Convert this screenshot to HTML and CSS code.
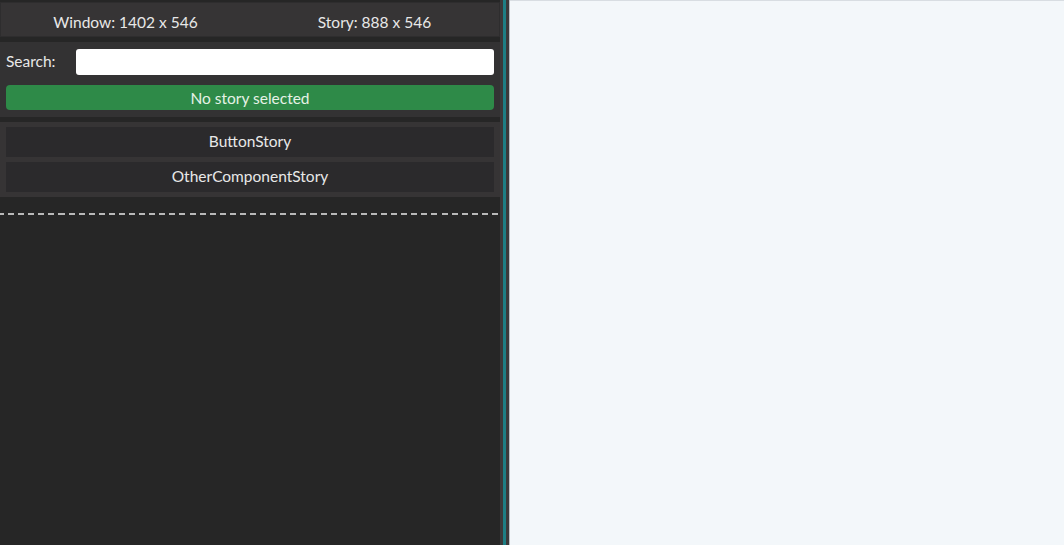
FILE: index.html
```html
<!DOCTYPE html>
<html>
<head>
<meta charset="utf-8">
<link rel="stylesheet" href="styles.css">
</head>
<body>
<div class="app">
  <aside class="sidebar">
    <div class="panel header">
      <div class="cell">Window: 1402 x 546</div>
      <div class="cell">Story: 888 x 546</div>
    </div>
    <div class="panel search">
      <div class="search-row">
        <label class="search-label">Search:</label>
        <input class="search-input" type="text">
      </div>
      <div class="status">No story selected</div>
    </div>
    <div class="panel list">
      <div class="item">ButtonStory</div>
      <div class="item">OtherComponentStory</div>
    </div>
    <div class="dashed"></div>
  </aside>
  <div class="divider">
    <div class="div-a"></div>
    <div class="div-teal"></div>
    <div class="div-b"></div>
    <div class="div-c"></div>
  </div>
  <main class="stage"></main>
</div>
</body>
</html>
```

FILE: styles.css
```css
html, body {
  margin: 0;
  padding: 0;
  height: 100%;
}
body {
  font-family: Lato, "Noto Sans", sans-serif;
  font-size: 15.5px;
  color: #e8e8e8;
  background: #f3f7fa;
}
.app {
  display: flex;
  height: 545px;
}
.sidebar {
  width: 500px;
  background: #262626;
  display: flex;
  flex-direction: column;
  padding-top: 2px;
  box-sizing: border-box;
}
.panel {
  background: #363435;
  box-sizing: border-box;
}
.header {
  height: 35px;
  display: flex;
  align-items: center;
  padding-top: 4px;
  border: 1px solid #2e2d2e;
}
.cell {
  flex: 1;
  text-align: center;
}
.search {
  margin-top: 5px;
  background: #333233;
  padding: 7px 6px 7px 6px;
  height: 75px;
}
.search-row {
  display: flex;
  align-items: center;
  height: 26px;
}
.search-label {
  width: 70px;
  padding-bottom: 2px;
}
.search-input {
  flex: 1;
  height: 26px;
  border: none;
  border-radius: 3px;
  background: #fff;
  padding: 0;
  margin: 0;
  outline: none;
}
.status {
  margin-top: 10px;
  height: 25px;
  background: #2e8a48;
  border-radius: 4px;
  color: #e6f2e6;
  display: flex;
  align-items: center;
  justify-content: center;
}
.list {
  margin-top: 5px;
  padding: 5px 6px;
  display: flex;
  flex-direction: column;
  gap: 5px;
}
.item {
  height: 30px;
  background: #2b2a2c;
  display: flex;
  align-items: center;
  justify-content: center;
  padding-bottom: 2px;
  box-sizing: border-box;
}
.dashed {
  margin-top: 16px;
  height: 0;
  border-top: 2px dashed #b9b9b9;
  border-image: repeating-linear-gradient(90deg, #b9b9b9 0 6px, transparent 6px 10px) 2;
}
.divider {
  width: 10px;
  display: flex;
}
.div-a { width: 3px; background: #3a393a; }
.div-teal { width: 3px; background: #1d7e84; }
.div-b { width: 3px; background: #3a393a; }
.div-c { width: 1px; background: #b9bec4; }
.stage {
  flex: 1;
  background: #f3f7fa;
  border-top: 1px solid #d8dde2;
}
```
